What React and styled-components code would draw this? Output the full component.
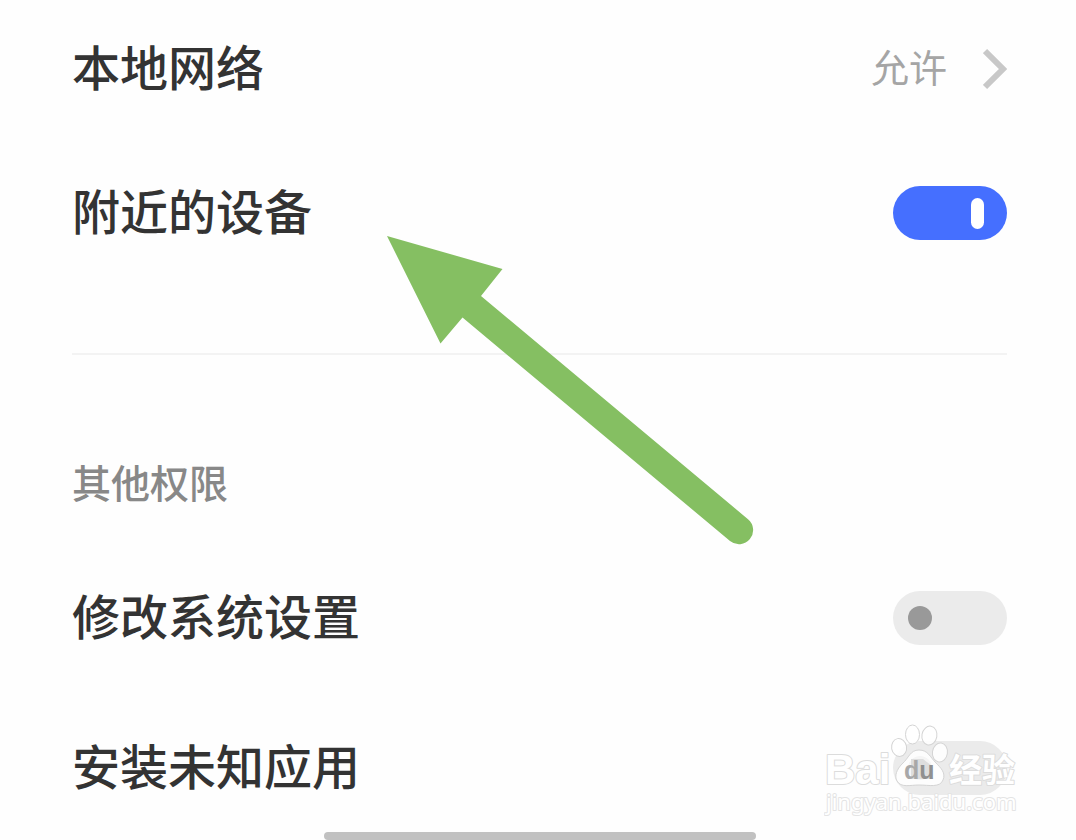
import React from "react";
import styled, { createGlobalStyle, css } from "styled-components";

const GlobalStyle = createGlobalStyle`
  * { box-sizing: border-box; }
  body {
    margin: 0;
    background: #fefefe;
    color: #333333;
    font-family: "Noto Sans CJK SC", "Noto Sans", sans-serif;
  }
`;

const Screen = styled.main`
  position: relative;
  display: flex;
  flex-direction: column;
  padding: 21px 69px 0 72px;
`;

const Group = styled.section`
  display: flex;
  flex-direction: column;
  gap: ${(p) => p.$gap}px;
`;

const Row = styled.div`
  display: flex;
  align-items: center;
  justify-content: space-between;
  min-height: 96px;
`;

const titleText = css`
  padding-bottom: 8px;
  font-size: 48px;
  line-height: 72px;
  font-weight: 500;
`;

const Label = styled.label`
  ${titleText}
`;

const RowTitle = styled.span`
  ${titleText}
`;

const ValueButton = styled.button`
  display: flex;
  align-items: center;
  gap: 36px;
  padding: 0;
  border: 0;
  background: none;
  color: #a5a5a5;
  font-family: inherit;
  font-size: 38px;
  line-height: 56px;
`;

const Value = styled.span`
  padding-bottom: 6px;
`;

const Toggle = styled.input`
  appearance: none;
  display: flex;
  align-items: center;
  flex: none;
  width: 114px;
  height: 54px;
  margin: 0;
  padding: 0 15px;
  border-radius: 27px;
  background: #ebebeb;

  &::before {
    content: "";
    width: 24px;
    height: 24px;
    border-radius: 12px;
    background: #999999;
  }

  &:checked {
    justify-content: flex-end;
    padding: 0 23px;
    background: #456fff;
  }

  &:checked::before {
    width: 13px;
    height: 31px;
    border-radius: 7px;
    background: #ffffff;
  }
`;

const Divider = styled.hr`
  width: 100%;
  height: 2px;
  margin: 92px 0 102px;
  border: 0;
  background: #f3f3f3;
`;

const SectionTitle = styled.h2`
  margin: 0 0 65px;
  color: #888888;
  font-size: 39px;
  line-height: 48px;
  font-weight: 500;
`;

const HomeBar = styled.div`
  align-self: center;
  width: 432px;
  max-width: 100%;
  height: 8px;
  margin-top: 16px;
  border-radius: 4px;
  background: #c1c1c1;
`;

const Pointer = styled.svg`
  position: absolute;
  left: 386px;
  top: 235px;
  pointer-events: none;
`;

const Watermark = styled.svg`
  position: absolute;
  right: 52px;
  bottom: 20px;
  pointer-events: none;
`;

function ToggleRow({ id, label, checked }) {
  return (
    <Row>
      <Label htmlFor={id}>{label}</Label>
      <Toggle id={id} type="checkbox" defaultChecked={checked} />
    </Row>
  );
}

function Chevron() {
  return (
    <svg width="24" height="42" viewBox="0 0 24 42" fill="none" aria-hidden="true">
      <path d="M2 3 L20 21 L2 39" stroke="#c8c8c8" strokeWidth="6" />
    </svg>
  );
}

function ArrowMark() {
  return (
    <Pointer width="370" height="312" viewBox="386 235 370 312" aria-hidden="true">
      <path
        d="M387 236 L502.500 269 L481 296 L748 519.200 A14 14 0 0 1 730 541 L462.500 317.500 L440.500 343.500 Z"
        fill="#85bf62"
      />
    </Pointer>
  );
}

function BaiduMark() {
  return (
    <Watermark width="200" height="100" viewBox="824 720 200 100" aria-label="Baidu 经验">
      <g
        fill="#ffffff"
        stroke="#dcdcdc"
        strokeWidth="2"
        strokeLinejoin="round"
        paintOrder="stroke"
      >
        <text x="825" y="784" fontFamily="Liberation Sans, sans-serif" fontWeight="700" fontSize="42">
          Bai
        </text>
        <text x="949" y="782" fontFamily="Noto Sans CJK SC, sans-serif" fontWeight="700" fontSize="33">
          经验
        </text>
        <text x="826" y="810" fontFamily="Noto Sans, sans-serif" fontSize="22" stroke="#e4e4e4">
          jingyan.baidu.com
        </text>
      </g>
      <g fill="#ffffff" fillOpacity="0.9" stroke="#d4d4d4" strokeWidth="1">
        <ellipse cx="899" cy="747.500" rx="7.500" ry="9" transform="rotate(-10 899 747)" />
        <ellipse cx="912.500" cy="734.500" rx="7" ry="9.500" />
        <ellipse cx="929.500" cy="735.500" rx="7.500" ry="9.500" transform="rotate(10 929 735)" />
        <ellipse cx="940" cy="752.500" rx="7.500" ry="9.500" transform="rotate(8 940 752)" />
        <path d="M919 750 C910 750 909 758 902 764 C897 769 894 776 897 781 C901 788 910 785 919 785 C929 785 940 788 943 780 C946 773 941 768 936 763 C930 757 928 750 919 750 Z" />
      </g>
      <path d="M911 759 h12 l9 7 v13 h-21 z" fill="#dedede" />
      <text x="904" y="779" fontFamily="Liberation Sans, sans-serif" fontWeight="700" fontSize="25">
        <tspan fill="#a8a8a8">d</tspan>
        <tspan fill="#909090">u</tspan>
      </text>
    </Watermark>
  );
}

export default function App() {
  return (
    <>
      <GlobalStyle />
      <Screen>
        <Group $gap={48}>
          <Row>
            <RowTitle id="local-network">本地网络</RowTitle>
            <ValueButton type="button" aria-describedby="local-network">
              <Value>允许</Value>
              <Chevron />
            </ValueButton>
          </Row>
          <ToggleRow id="nearby" label="附近的设备" checked />
        </Group>
        <Divider />
        <SectionTitle>其他权限</SectionTitle>
        <Group $gap={54}>
          <ToggleRow id="system-settings" label="修改系统设置" />
          <ToggleRow id="unknown-apps" label="安装未知应用" />
        </Group>
        <HomeBar />
        <ArrowMark />
        <BaiduMark />
      </Screen>
    </>
  );
}
